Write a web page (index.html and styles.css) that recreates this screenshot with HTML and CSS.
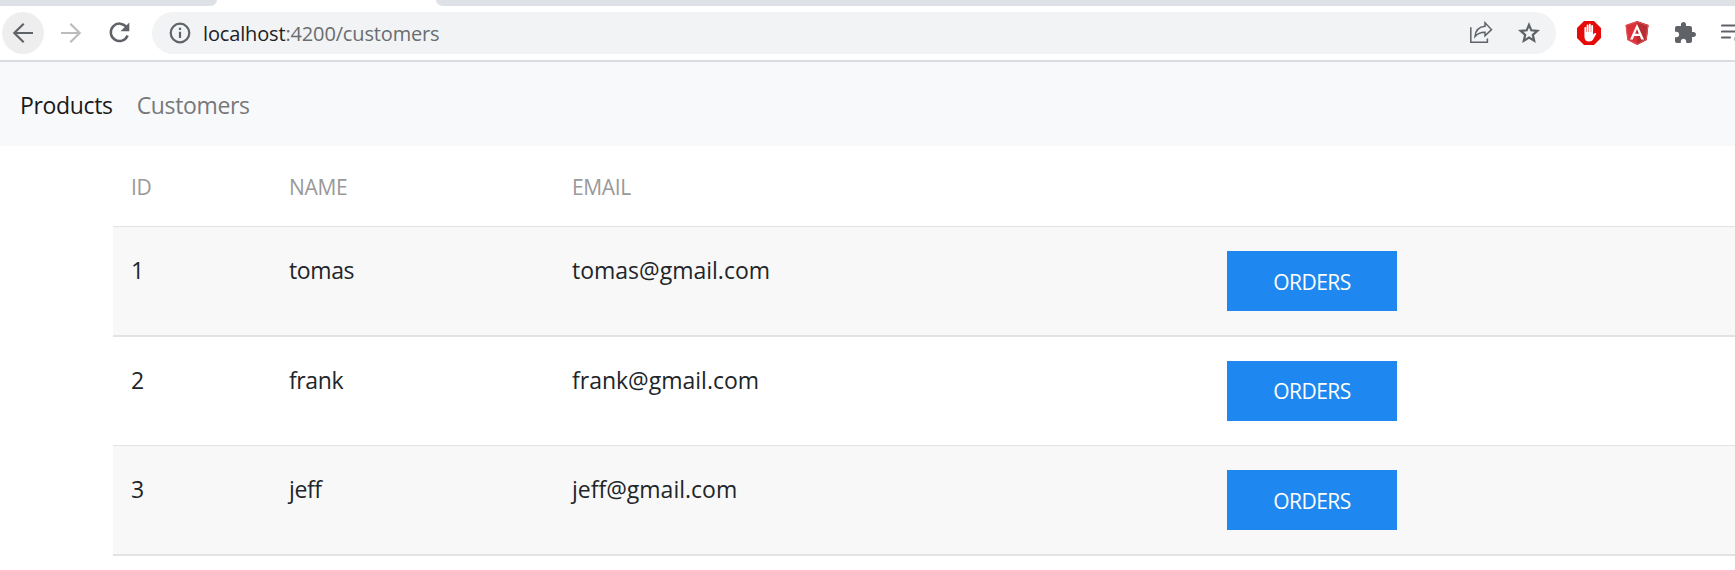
FILE: index.html
```html
<!DOCTYPE html>
<html lang="en">
<head>
<meta charset="utf-8">
<title>Customers</title>
<link rel="stylesheet" href="styles.css">
</head>
<body>
<div class="tabstrip"><span class="tab-left"></span><span class="tab-right"></span></div>
<header class="toolbar">
  <span class="nav-btn active"><svg width="24" height="24" viewBox="0 0 24 24"><path class="line" d="M22 12H3.2M12.7 2.7L3.3 12l9.4 9.3"/></svg></span>
  <span class="nav-btn muted"><svg width="24" height="24" viewBox="0 0 24 24"><path class="line" d="M2 12h18.8M11.3 2.7l9.4 9.3-9.4 9.3"/></svg></span>
  <span class="nav-btn"><svg width="24" height="24" viewBox="0 0 24 24"><path class="line thick" d="M19.6 6.3A8.7 8.7 0 1 0 20.6 14.5"/><path class="solid" d="M22.3 1.6V10.3H13.6z"/></svg></span>
  <div class="omnibox">
    <svg width="22" height="22" viewBox="0 0 22 22"><circle class="line" cx="11" cy="11" r="9.3"/><path class="line" d="M11 9.8V16M11 5.8V8"/></svg>
    <span class="url"><b>localhost</b>:4200/customers</span>
    <svg class="share" width="24" height="24" viewBox="0 0 24 24"><path class="line thin" d="M1.800 6.200V21.300H18.400V17.400"/><path class="line thin" d="M16 1.700L22.500 8.600 16 14.700V11.200C11.400 11.100 8.600 12.500 6 15.500 6.600 9.700 10 5.800 16 5.300z"/></svg>
    <svg class="star" width="22" height="22" viewBox="0 0 22 22"><path class="line" d="M11 2.800L13.300 8.300 19.400 8.800 14.800 12.800 16.200 18.800 11 15.600 5.800 18.800 7.200 12.800 2.600 8.800 8.700 8.300z"/></svg>
  </div>
  <div class="extensions">
    <svg width="24" height="24" viewBox="0 0 24 24"><path fill="#e60b0b" d="M7 0h10l7 7v10l-7 7H7l-7-7V7z"/><path fill="#fff" d="M7.400 7c0-1.400 1.800-1.400 1.800 0v4h.4V4.600c0-1.500 1.900-1.500 1.900 0V11h.4V3.800c0-1.500 1.900-1.500 1.900 0V11h.4V5.200c0-1.500 1.900-1.500 1.900 0v8.300c1-.8 1.600-1.900 2.700-1.500.7.3.4.9.1 1.500l-2.800 5.100c-.8 1.300-1.800 2-4 2-3.200 0-4.700-2-4.700-5z"/></svg>
    <svg width="24" height="24" viewBox="0 0 24 24"><path fill="#dd3039" d="M12 0l11.500 4-1.800 15L12 24 2.300 19 .5 4z"/><path fill="#b52e31" d="M12 0l11.500 4-1.800 15L12 24z"/><path fill="none" stroke="#dd5358" d="M12 .8L1.200 4.500l1.800 14 9 4.700 9-4.700 1.800-14z"/><path fill="#fff" fill-rule="evenodd" d="M12 3l7 15.500h-2.800l-1.400-3.600H9.200l-1.400 3.600H5zM12 8l-1.900 4.700h3.800z"/></svg>
    <svg width="24" height="24" viewBox="0 0 24 24"><path class="solid" d="M20.500 11H19V7c0-1.100-.9-2-2-2h-4V3.500C13 2.100 11.900 1 10.500 1S8 2.100 8 3.500V5H4c-1.100 0-2 .9-2 2v3.800H3.500c1.500 0 2.700 1.200 2.700 2.700S5 16.200 3.500 16.200H2V20c0 1.100.9 2 2 2h3.800v-1.500c0-1.500 1.200-2.700 2.700-2.700s2.700 1.200 2.700 2.700V22H17c1.100 0 2-.9 2-2v-4h1.500c1.400 0 2.500-1.100 2.500-2.500S21.900 11 20.500 11z"/></svg>
    <svg width="24" height="24" viewBox="0 0 24 24"><path class="line" stroke-linecap="round" d="M1 4.500H18M1 10.500H18M1 16.500H9"/><circle class="solid" cx="17" cy="18" r="3.500"/></svg>
  </div>
</header>
<nav class="navbar"><a class="current">Products</a><a>Customers</a></nav>
<main class="table">
  <div class="row head"><span>ID</span><span>NAME</span><span>EMAIL</span><span></span></div>
  <div class="row odd"><span>1</span><span class="name">tomas</span><span>tomas@gmail.com</span><button class="orders">ORDERS</button></div>
  <div class="row even"><span>2</span><span class="name">frank</span><span>frank@gmail.com</span><button class="orders">ORDERS</button></div>
  <div class="row odd"><span>3</span><span class="name">jeff</span><span>jeff@gmail.com</span><button class="orders">ORDERS</button></div>
</main>
</body>
</html>
```
FILE: styles.css
```css
* { box-sizing: border-box; }
body {
  margin: 0;
  height: 570px;
  overflow: hidden;
  background: #fff;
  color: #212529;
  font: 23px/34px "Open Sans", "Noto Sans", sans-serif;
}
svg { display: block; flex: none; }
.line { fill: none; stroke: #5f6368; stroke-width: 2.2; }
.thick { stroke-width: 2.5; }
.thin { stroke-width: 1.5; }
.solid { fill: #5f6368; }

.tabstrip { display: flex; justify-content: space-between; height: 6px; }
.tab-left { width: 217px; background: #dee1e6; border-bottom-right-radius: 9px 8px; }
.tab-right { width: 1299px; background: #dee1e6; border-bottom-left-radius: 9px 8px; }

.toolbar {
  display: flex;
  align-items: center;
  height: 56px;
  padding: 0 0 0 2px;
  border-bottom: 2px solid #dadce0;
  overflow: hidden;
}
.nav-btn {
  display: flex;
  align-items: center;
  justify-content: center;
  flex: none;
  width: 42px;
  height: 42px;
  margin-right: 6px;
  border-radius: 50%;
}
.nav-btn.active { background: #eee; }
.nav-btn.muted .line { stroke: #babcbe; }
.omnibox {
  display: flex;
  align-items: center;
  flex: none;
  width: 1404px;
  height: 42px;
  margin-left: 6px;
  padding: 0 16px 0 17px;
  border-radius: 21px;
  background: #f1f3f4;
}
.url {
  flex: 1;
  margin-left: 12px;
  padding-top: 1px;
  color: #6a6d71;
  font-size: 20px;
  letter-spacing: -0.15px;
}
.url b { color: #202124; font-weight: 400; }
.star { margin-left: 25px; }
.extensions { display: flex; flex: none; gap: 24px; margin-left: 21px; }

.navbar {
  display: flex;
  align-items: center;
  gap: 24px;
  height: 84px;
  padding: 2px 0 0 20px;
  background: #f8f9fb;
  color: #77787a;
  letter-spacing: -0.35px;
}
.current { color: #18191a; }

.table { margin-left: 113px; }
.row {
  display: grid;
  grid-template-columns: 158px 283px 655px 170px;
  align-items: start;
  height: 110px;
  padding: 26px 0 0 18px;
  border-bottom: 2px solid #e3e3e3;
}
.head {
  align-items: center;
  height: 81px;
  padding-top: 1px;
  border-bottom-width: 1px;
  color: #999;
  font-size: 21px;
  letter-spacing: -0.35px;
}
.name { letter-spacing: -0.4px; }
.odd { background: #f8f8f8; }
.even { height: 109px; border-bottom-width: 1px; }
.orders {
  height: 60px;
  margin: -2px 0 0;
  padding: 2px 0 0;
  border: 0;
  background: #1e88f0;
  color: #fff;
  font: 21px/34px "Open Sans", "Noto Sans", sans-serif;
  letter-spacing: -0.5px;
}
.even .orders { padding-top: 0; }
```
